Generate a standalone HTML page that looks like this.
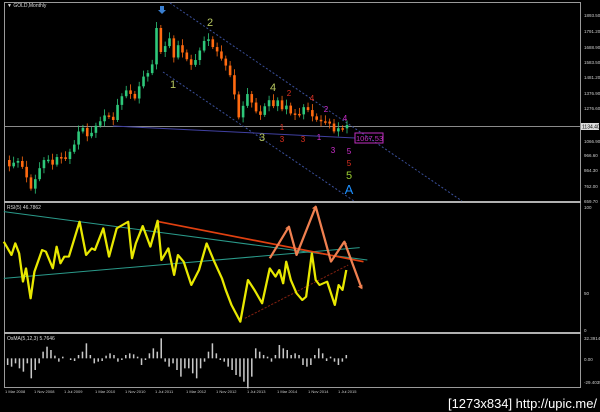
<!DOCTYPE html>
<html><head><meta charset="utf-8"><style>
html,body{margin:0;padding:0;background:#000;width:600px;height:412px;overflow:hidden}
svg{position:absolute;left:0;top:0}
text{font-family:"Liberation Sans",sans-serif}
</style></head><body>
<svg id="s" width="600" height="412" viewBox="0 0 600 412">
<rect width="600" height="412" fill="#000"/>
<g stroke="#9a9a9a" fill="none" stroke-width="1">
<rect x="4.5" y="2.5" width="576" height="385"/>
</g>
<rect x="4" y="201" width="577" height="2" fill="#b0b0b0"/>
<rect x="4" y="332" width="577" height="2" fill="#b0b0b0"/>
<line x1="5" y1="126.5" x2="580" y2="126.5" stroke="#8a8a8a"/>
<line x1="170" y1="3" x2="462" y2="201" stroke="#3a4f9a" stroke-dasharray="2,2"/>
<line x1="163" y1="72" x2="354" y2="201" stroke="#3a4f9a" stroke-dasharray="2,2"/>
<line x1="113" y1="126" x2="355" y2="138" stroke="#4040a0"/>
<g id="candles"></g>
<g font-size="11" text-anchor="middle">
<text x="210" y="26" fill="#b8c860">2</text>
<text x="173" y="88" fill="#b8c860">1</text>
<text x="273" y="91" fill="#b8c860">4</text>
<text x="262" y="141" fill="#b8c860">3</text>
<text x="349" y="179" fill="#9acd32">5</text>
<text x="349" y="194" fill="#1e90ff" font-size="13">A</text>
</g>
<g font-size="8" text-anchor="middle">
<text x="289" y="96" fill="#e03020">2</text>
<text x="282" y="130" fill="#e03020">1</text>
<text x="312" y="101" fill="#e03020">4</text>
<text x="303" y="142" fill="#e03020">3</text>
<text x="282" y="142" fill="#e03020">3</text>
<text x="326" y="112" fill="#d030d0">2</text>
<text x="345" y="121" fill="#d030d0">4</text>
<text x="319" y="140" fill="#d030d0">1</text>
<text x="333" y="153" fill="#d030d0">3</text>
<text x="349" y="154" fill="#d030d0">5</text>
<text x="349" y="166" fill="#e03020">5</text>
</g>
<path d="M160 6 h4 v4 h2 l-4 4 l-4 -4 h2z" fill="#3a7fd0"/>
<rect x="355" y="133" width="28" height="10" fill="none" stroke="#c030c0"/>
<text x="356" y="141" font-size="7.5" fill="#c030c0">1067.53</text>
<text x="7" y="7" font-size="5" fill="#ddd">▼ GOLD,Monthly</text>
<g font-size="4.5" fill="#ccc">
<text x="584" y="17">1893.50</text><text x="584" y="33">1791.20</text><text x="584" y="49">1688.90</text>
<text x="584" y="64">1583.50</text><text x="584" y="79">1481.20</text><text x="584" y="95">1376.90</text>
<text x="584" y="110">1276.60</text><text x="584" y="143">1066.90</text><text x="584" y="157">966.60</text>
<text x="584" y="172">864.30</text><text x="584" y="188">762.00</text><text x="584" y="203">659.70</text>
<text x="584" y="209">100</text><text x="584" y="295">50</text><text x="584" y="332">0</text>
<text x="584" y="340">32.3914</text><text x="584" y="361">0.00</text><text x="584" y="384">-29.4035</text>
</g>
<rect x="581" y="123" width="18" height="7" fill="#ddd"/>
<text x="582" y="128.5" font-size="5" fill="#000">1134.40</text>
<text x="7" y="209" font-size="5" fill="#ddd">RSI(5) 46.7862</text>
<text x="7" y="340" font-size="5" fill="#ddd">OsMA(5,12,3) 5.7646</text>
<g font-size="4" fill="#ccc">
<text x="5" y="393">1 Mar 2008</text><text x="34" y="393">1 Nov 2008</text><text x="64" y="393">1 Jul 2009</text>
<text x="95" y="393">1 Mar 2010</text><text x="125" y="393">1 Nov 2010</text><text x="155" y="393">1 Jul 2011</text>
<text x="186" y="393">1 Mar 2012</text><text x="216" y="393">1 Nov 2012</text><text x="247" y="393">1 Jul 2013</text>
<text x="277" y="393">1 Mar 2014</text><text x="308" y="393">1 Nov 2014</text><text x="338" y="393">1 Jul 2015</text>
</g>
<text x="448" y="408" font-size="12.5" fill="#fff" textLength="149" lengthAdjust="spacingAndGlyphs">[1273x834] http://upic.me/</text>
<svg x="0" y="200" width="600" height="212" viewBox="0 0 1568 636" preserveAspectRatio="none">
<g fill="none">
<line x1="10" y1="35" x2="960" y2="180" stroke="#2a9a8a" stroke-width="3"/>
<line x1="10" y1="235" x2="940" y2="143" stroke="#2a9a8a" stroke-width="3"/>
<line x1="415" y1="65" x2="950" y2="185" stroke="#e04010" stroke-width="5"/>
<line x1="640" y1="355" x2="910" y2="195" stroke="#802010" stroke-width="3" stroke-dasharray="6,4"/>
<polyline stroke="#e8e800" stroke-width="6" stroke-linejoin="round" points="10,125 30,165 40,130 50,160 60,245 68,205 80,295 90,215 110,150 120,155 138,205 148,140 158,190 168,170 180,170 208,65 225,165 240,145 248,150 270,85 285,170 305,85 335,65 345,175 355,130 373,78 393,140 412,62 422,180 440,145 455,225 465,165 480,185 500,255 520,210 540,130 560,185 580,235 590,270 605,315 628,365 648,240 665,270 685,310 705,205 720,230 730,210 740,250 748,185 760,240 775,280 790,300 800,290 815,160 825,240 835,255 855,245 875,315 885,255 895,270 905,210"/>
<polyline stroke="#f08050" stroke-width="6" stroke-linejoin="round" points="705,175 755,80 775,165 825,20 865,185 900,125 945,265"/>
</g>
<path d="M745,85 l10,-8 l5,12z M815,25 l10,-8 l5,12z M893,130 l7,-8 l7,10z M935,260 l12,8 l0,-14z" fill="#f08050"/>
<g id="hist"></g>
</svg>
</svg>
<script>
var c=[160,165,168,162,160,163,168,175,186,190,180,172,165,160,158,162,165,158,155,158,160,155,150,145,140,124,128,135,138,132,126,125,120,116,113,119,121,108,102,96,92,88,95,102,90,85,78,70,75,65,55,30,55,50,40,38,65,38,48,52,55,62,65,62,58,50,44,36,40,46,50,52,58,62,68,75,80,110,118,115,90,95,100,110,112,116,108,105,100,108,104,100,110,108,105,112,118,112,115,110,105,110,115,118,120,122,120,122,124,122,136,128,130,127,125];
var N=80,d=[];
for(var k=0;k<N;k++){var p=k*(c.length-1)/(N-1),a=Math.floor(p),f=p-a;d.push(a+1<c.length?c[a]*(1-f)+c[a+1]*f:c[a]);}
d[35]=28;d[36]=52;
var g=document.getElementById("candles"),h="";
var step=(347-5)/(N-1);
for(var i=1;i<N;i++){var o=d[i-1],cl=d[i],x=5+i*step;var t=Math.min(o,cl),b=Math.max(o,cl);if(b-t<1.5)b=t+1.5;
var col=cl<o?"#2ec87a":"#ff6a10";
h+='<line x1="'+x+'" x2="'+x+'" y1="'+(t-3-(i%3)*1.5)+'" y2="'+(b+2+(i%2)*3)+'" stroke="'+col+'" stroke-width="0.8"/>';
h+='<rect x="'+(x-1.3)+'" y="'+t+'" width="2.6" height="'+(b-t)+'" fill="'+col+'"/>';}
g.innerHTML=h;
var hv=[-20,-25,-15,-30,-40,-15,-60,-35,-15,20,35,25,8,-10,5,0,-5,-8,10,20,45,10,-15,-10,-8,8,15,10,-10,-5,10,15,12,5,-20,-5,15,30,20,60,-10,-25,-15,-35,-55,-30,-30,-45,-60,-30,-10,20,45,15,-5,-10,-25,-35,-50,-55,-70,-90,-55,30,20,10,5,-10,10,40,30,25,10,15,10,-20,-25,-20,10,30,15,-8,5,-10,-20,-10,10];
var hg=document.getElementById("hist"),hh="";
for(var j=0;j<hv.length;j++){var x=20+j*(885/(hv.length-1)),v=hv[j];
hh+='<rect x="'+(x-2)+'" y="'+(v<0?475:475-v)+'" width="4" height="'+Math.abs(v)+'" fill="#c8c8c8"/>';}
hg.innerHTML=hh;
</script>
</body></html>
